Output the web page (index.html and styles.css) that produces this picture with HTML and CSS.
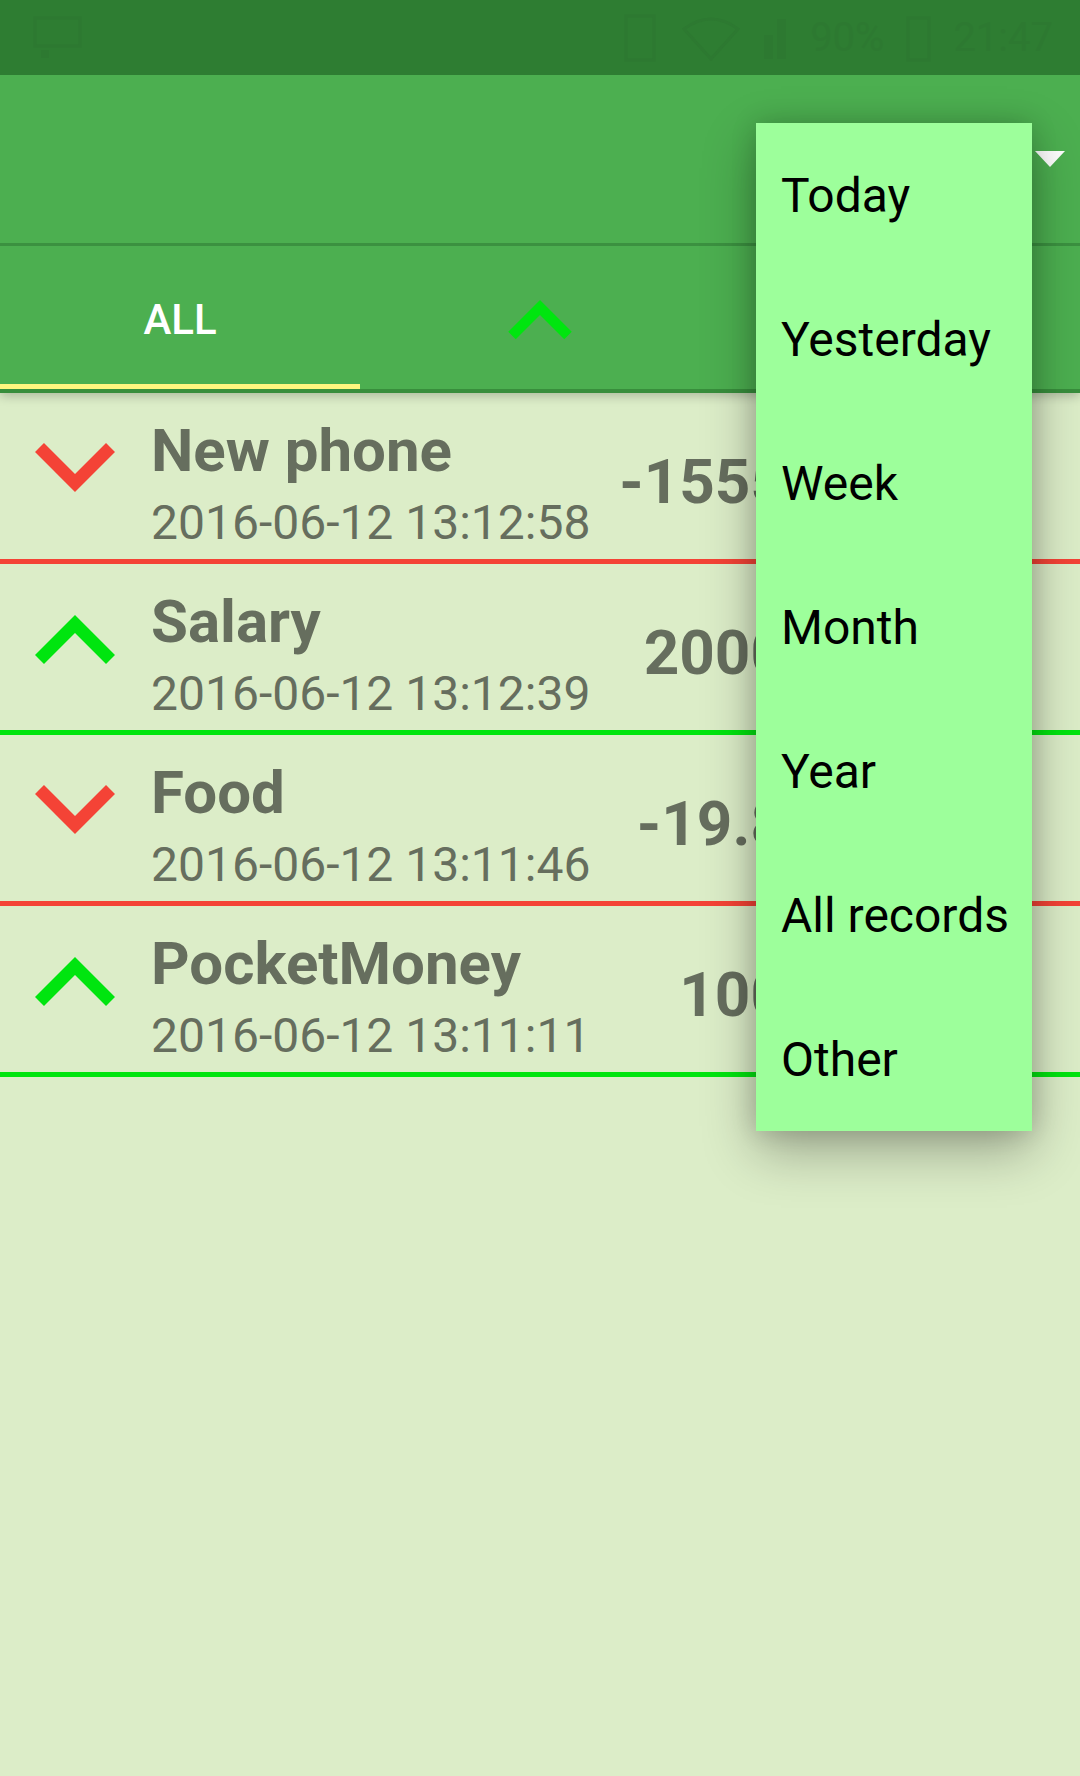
FILE: index.html
```html
<!DOCTYPE html>
<html>
<head>
<meta charset="utf-8">
<link rel="stylesheet" href="styles.css">
</head>
<body>
<div class="screen">
  <header class="header">
    <div class="statusbar">
      <svg class="sb-icon" width="49" height="44" viewBox="0 0 49 44"><rect x="2" y="2" width="45" height="28" fill="none" stroke="currentColor" stroke-width="3"/><rect x="8" y="34" width="8" height="8" fill="currentColor"/></svg>
      <div class="sb-right">
        <svg width="40" height="48" viewBox="0 0 40 48"><rect x="6" y="2" width="28" height="44" fill="none" stroke="currentColor" stroke-width="3"/></svg>
        <svg width="58" height="46" viewBox="0 0 58 46"><path d="M2 14 Q29 -6 56 14 L29 44 Z" fill="none" stroke="currentColor" stroke-width="3"/></svg>
        <svg width="26" height="46" viewBox="0 0 26 46"><rect x="2" y="20" width="9" height="24" fill="currentColor"/><rect x="15" y="4" width="9" height="40" fill="currentColor"/></svg>
        <span class="sb-text">90%</span>
        <svg width="25" height="48" viewBox="0 0 25 48"><rect x="2" y="4" width="21" height="42" fill="none" stroke="currentColor" stroke-width="3"/></svg>
        <span class="sb-text">21:47</span>
      </div>
    </div>
    <div class="toolbar">
      <svg class="spinner-arrow" width="30" height="16" viewBox="0 0 30 16"><path d="M0 0 H30 L15 16 Z" fill="#ffffff"/></svg>
    </div>
    <nav class="tabs">
      <div class="tab tab-active">ALL</div>
      <div class="tab">
        <svg width="64" height="40" viewBox="0 0 64 40"><polyline points="4,35.5 32,7.5 60,35.5" fill="none" stroke="#00e50f" stroke-width="10.6" stroke-linejoin="miter"/></svg>
      </div>
      <div class="tab">
        <svg width="64" height="40" viewBox="0 0 64 40"><polyline points="4,4.5 32,32.5 60,4.5" fill="none" stroke="#f44336" stroke-width="10.6" stroke-linejoin="miter"/></svg>
      </div>
    </nav>
  </header>

  <main class="list">
    <div class="row row-out">
      <svg class="chev" width="80" height="50" viewBox="0 0 80 50"><polyline points="4.5,4.5 40,40 75.5,4.5" fill="none" stroke="#f44336" stroke-width="12.7" stroke-linejoin="miter"/></svg>
      <div class="info">
        <div class="title">New phone</div>
        <div class="date">2016-06-12 13:12:58</div>
      </div>
      <div class="amount">-1555</div>
    </div>
    <div class="row row-in">
      <svg class="chev" width="80" height="50" viewBox="0 0 80 50"><polyline points="4.5,45.5 40,10 75.5,45.5" fill="none" stroke="#00e50f" stroke-width="12.7" stroke-linejoin="miter"/></svg>
      <div class="info">
        <div class="title">Salary</div>
        <div class="date">2016-06-12 13:12:39</div>
      </div>
      <div class="amount">2000</div>
    </div>
    <div class="row row-out">
      <svg class="chev" width="80" height="50" viewBox="0 0 80 50"><polyline points="4.5,4.5 40,40 75.5,4.5" fill="none" stroke="#f44336" stroke-width="12.7" stroke-linejoin="miter"/></svg>
      <div class="info">
        <div class="title">Food</div>
        <div class="date">2016-06-12 13:11:46</div>
      </div>
      <div class="amount">-19.8</div>
    </div>
    <div class="row row-in">
      <svg class="chev" width="80" height="50" viewBox="0 0 80 50"><polyline points="4.5,45.5 40,10 75.5,45.5" fill="none" stroke="#00e50f" stroke-width="12.7" stroke-linejoin="miter"/></svg>
      <div class="info">
        <div class="title">PocketMoney</div>
        <div class="date">2016-06-12 13:11:11</div>
      </div>
      <div class="amount">100</div>
    </div>
  </main>

  <ul class="menu">
    <li>Today</li>
    <li>Yesterday</li>
    <li>Week</li>
    <li>Month</li>
    <li>Year</li>
    <li>All records</li>
    <li>Other</li>
  </ul>
</div>
</body>
</html>
```
FILE: styles.css
```css
* { box-sizing: border-box; }
html, body {
  margin: 0;
  padding: 0;
}
body {
  font-family: Roboto, "Noto Sans", "Liberation Sans", sans-serif;
  background: #dcedc8;
}
.screen {
  position: relative;
  width: 1080px;
  height: 1776px;
  overflow: hidden;
  background: #dcedc8;
}
.header {
  position: relative;
  z-index: 2;
  box-shadow: 0 3px 10px rgba(0, 0, 0, 0.22);
}
.statusbar {
  height: 75px;
  background: #2e7d32;
  color: #2d7931;
  display: flex;
  align-items: center;
  justify-content: space-between;
  padding: 0 27px 0 33px;
}
.sb-right {
  display: flex;
  align-items: center;
  gap: 22px;
}
.sb-text {
  font-size: 40px;
  line-height: 1;
}
.toolbar {
  height: 171px;
  background: #4caf50;
  border-bottom: 3px solid #3b9140;
  display: flex;
  align-items: center;
  justify-content: flex-end;
  padding-right: 15px;
}
.tabs {
  height: 147px;
  background: #4caf50;
  border-bottom: 4px solid #388e3c;
  display: grid;
  grid-template-columns: 1fr 1fr 1fr;
}
.tab {
  display: flex;
  align-items: center;
  justify-content: center;
  color: #ffffff;
  font-size: 42px;
  font-weight: 500;
  padding-top: 4px;
}
.tab-active {
  box-shadow: inset 0 -5px 0 #fff67f;
}
.list {
  position: relative;
  z-index: 1;
}
.row {
  height: 171px;
  display: flex;
  align-items: flex-start;
  color: #666e5e;
}
.row-out { border-bottom: 5px solid #f44336; }
.row-in { border-bottom: 5px solid #00e50f; }
.chev {
  flex: none;
  margin: 50px 0 0 35px;
}
.info {
  flex: none;
  margin-left: 36px;
  padding-top: 23px;
}
.title {
  font-size: 60px;
  font-weight: 700;
  line-height: 70px;
  white-space: nowrap;
}
.date {
  font-size: 48px;
  line-height: 56px;
  margin-top: 9px;
  white-space: nowrap;
}
.amount {
  flex: 1;
  text-align: right;
  font-size: 62px;
  font-weight: 700;
  line-height: 62px;
  margin-top: 58px;
  padding-right: 294px;
  white-space: nowrap;
}
.menu {
  position: absolute;
  z-index: 5;
  top: 123px;
  left: 756px;
  width: 276px;
  margin: 0;
  padding: 0;
  list-style: none;
  background: #9dff9b;
  box-shadow: 0 20px 50px rgba(0, 0, 0, 0.3), 0 0 24px rgba(0, 0, 0, 0.16);
}
.menu li {
  height: 144px;
  display: flex;
  align-items: center;
  padding-left: 25px;
  font-size: 48px;
  color: #000000;
  white-space: nowrap;
}
```
